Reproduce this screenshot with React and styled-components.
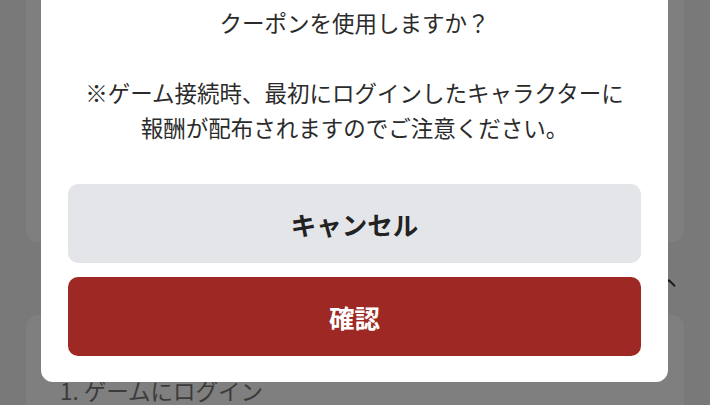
import React from "react";
import styled, { createGlobalStyle } from "styled-components";

const GlobalStyle = createGlobalStyle`
  html, body { margin: 0; padding: 0; }
  body {
    background: #f2f3f5;
    font-family: "Noto Sans CJK JP", "Noto Sans", sans-serif;
  }
`;

const Page = styled.div`
  position: relative;
  height: 405px;
  overflow: hidden;
  background: #f2f3f5;
  padding: 0 26px;
  box-sizing: border-box;
`;

const Card = styled.section`
  background: #ffffff;
  border-radius: 12px;
  margin-top: ${(p) => p.$offset || 0}px;
  height: ${(p) => (p.$height ? `${p.$height}px` : "auto")};
  padding: ${(p) => p.$padding || "0"};
  box-sizing: border-box;
`;

const SectionHeader = styled.div`
  height: 73px;
  display: flex;
  align-items: center;
  justify-content: space-between;
  padding: 8px 4px 0 34px;
  box-sizing: border-box;
  color: #374151;
  font-size: 22px;
`;

const Chevron = styled.svg`
  width: 22px;
  height: 22px;
  display: block;
`;

const StepText = styled.p`
  margin: 0;
  font-size: 22.5px;
  line-height: 35px;
  color: #777;
`;

const Overlay = styled.div`
  position: absolute;
  inset: 0;
  background: rgba(0, 0, 0, 0.5);
`;

const Modal = styled.div`
  position: absolute;
  left: 41px;
  top: -30px;
  width: 627px;
  background: #ffffff;
  border-radius: 12px;
  padding: 35px 27px 26px;
  box-sizing: border-box;
  display: flex;
  flex-direction: column;
  text-align: center;
  color: #2b2b2b;
`;

const Title = styled.h2`
  margin: 0;
  font-size: 22.5px;
  line-height: 35px;
  font-weight: 400;
`;

const Message = styled.p`
  margin: 35px 0 0;
  font-size: 22.5px;
  line-height: 35px;
`;

const Buttons = styled.div`
  margin-top: 39px;
  display: flex;
  flex-direction: column;
  gap: 14px;
`;

const Button = styled.button`
  height: 79px;
  border: none;
  border-radius: 10px;
  font-family: inherit;
  font-size: 25.5px;
  font-weight: 700;
  background: ${(p) => (p.$primary ? "#9d2824" : "#e4e5e9")};
  color: ${(p) => (p.$primary ? "#ffffff" : "#222")};
  cursor: pointer;
`;

export default function App() {
  return (
    <>
      <GlobalStyle />
      <Page>
        <Card $offset={-20} $height={262} />
        <SectionHeader>
          <span>ご利用方法</span>
          <Chevron viewBox="0 0 24 24" fill="none" stroke="#333" strokeWidth="2" strokeLinecap="round" strokeLinejoin="round">
            <path d="m18 15-6-6-6 6" />
          </Chevron>
        </SectionHeader>
        <Card $padding="58px 34px 20px">
          <StepText>1. ゲームにログイン</StepText>
        </Card>
        <Overlay />
        <Modal role="dialog">
          <Title>クーポンを使用しますか？</Title>
          <Message>
            ※ゲーム接続時、最初にログインしたキャラクターに
            <br />
            報酬が配布されますのでご注意ください。
          </Message>
          <Buttons>
            <Button>キャンセル</Button>
            <Button $primary>確認</Button>
          </Buttons>
        </Modal>
      </Page>
    </>
  );
}
